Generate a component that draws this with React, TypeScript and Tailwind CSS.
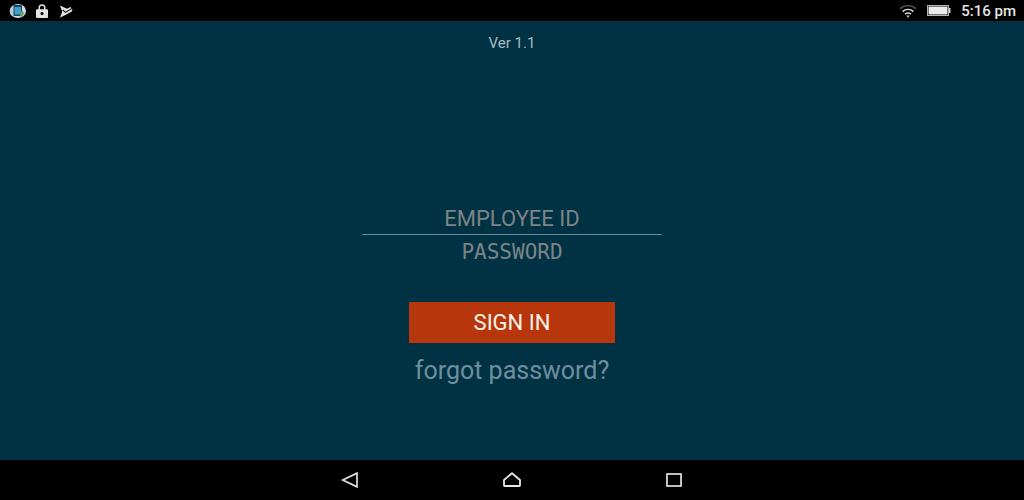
import { useState } from 'react';
import type { FormEvent } from 'react';

function StatusBar() {
  return (
    <header className="flex h-[21px] items-center justify-between bg-black px-2 text-[#e4e4e4]">
      <div className="flex items-center gap-2">
        <svg viewBox="0 0 20 16" className="h-4 w-5" aria-hidden="true">
          <ellipse cx="10" cy="8" rx="8" ry="7" fill="#d3dbe0" />
          <path d="M5 2.500a8 7 0 0 0-1 10.500l2 .5V3z" fill="#b4cbd6" />
          <rect x="5.500" y="2" width="8.500" height="11" rx="1" fill="#17465f" />
          <rect x="6.500" y="4" width="6.500" height="7.500" fill="#3f9fce" />
          <path d="M12 9l2.500-1 1.500 2-1.500 3.500h-2.500z" fill="#6aa06f" />
        </svg>
        <svg viewBox="0 0 12 16" className="h-4 w-3" aria-hidden="true">
          <path d="M3.200 7V4.700a2.800 2.800 0 0 1 5.600 0V7" fill="none" stroke="#e4e4e4" strokeWidth="1.500" />
          <path
            fillRule="evenodd"
            d="M1 6.200h10a1 1 0 0 1 1 1V14a1 1 0 0 1-1 1H1a1 1 0 0 1-1-1V7.200a1 1 0 0 1 1-1zM6 9a1.600 1.600 0 1 0 0 3.200A1.600 1.600 0 0 0 6 9z"
            fill="#e4e4e4"
          />
        </svg>
        <svg viewBox="0 0 16 16" className="ml-0.5 size-4" aria-hidden="true">
          <path d="M2 2.500L9 5.800 12.500 4 14.500 6.500 13.500 8.800 2 14.800 4.200 8.600z" fill="#e4e4e4" />
          <path d="M4.800 6.800l2.600 2.600 6.600-4" fill="none" stroke="#000" strokeWidth="1.100" />
        </svg>
      </div>
      <div className="flex items-center">
        <svg viewBox="0 0 18 14" className="mr-2.5 h-3.5 w-[18px]" fill="none" aria-hidden="true">
          <path d="M1 4.800c4.600-4.200 11.400-4.200 16 0" stroke="#555" strokeWidth="1.400" />
          <path d="M3.600 7.600c3.200-2.800 7.600-2.800 10.800 0" stroke="#d8d8d8" strokeWidth="1.600" />
          <path d="M6 10.200c1.900-1.500 4.100-1.500 6 0" stroke="#d8d8d8" strokeWidth="1.600" />
          <path d="M7.300 11.600h3.400L9 13.800z" fill="#d8d8d8" />
        </svg>
        <svg viewBox="0 0 24 12" className="mr-2.5 h-3 w-6" aria-hidden="true">
          <rect x="0.500" y="0.500" width="21" height="10" fill="none" stroke="#b5b5b5" />
          <rect x="1.500" y="1.500" width="19" height="8" fill="#ececec" />
          <rect x="22" y="3" width="1.500" height="5" fill="#d0d0d0" />
        </svg>
        <span className="text-[15px] leading-5 font-medium">5:16 pm</span>
      </div>
    </header>
  );
}

function NavBar() {
  return (
    <nav className="flex h-10 items-center justify-center gap-[142px] bg-black">
      <button type="button" aria-label="Back">
        <svg viewBox="0 0 20 20" className="size-5" fill="none" stroke="#e0e0e0" strokeWidth="1.700">
          <path d="M2.800 10L17 3.200v13.600z" />
        </svg>
      </button>
      <button type="button" aria-label="Home">
        <svg viewBox="0 0 20 20" className="size-5" fill="none" stroke="#e8e8e8" strokeWidth="1.800" strokeLinejoin="round">
          <path d="M10 3.200L18 10V15.300Q18 16 17.300 16H2.700Q2 16 2 15.300V10z" />
        </svg>
      </button>
      <button type="button" aria-label="Recent apps">
        <svg viewBox="0 0 20 20" className="size-5" fill="none" stroke="#e0e0e0" strokeWidth="1.700">
          <rect x="3" y="4" width="14" height="12" />
        </svg>
      </button>
    </nav>
  );
}

export default function App() {
  const [employeeId, setEmployeeId] = useState('');
  const [password, setPassword] = useState('');

  const handleSubmit = (e: FormEvent) => {
    e.preventDefault();
  };

  return (
    <div className="flex min-h-screen flex-col bg-[#003243] font-[Roboto,sans-serif]">
      <StatusBar />

      <main className="flex flex-1 flex-col items-center px-4 pt-3 pb-8">
        <p className="text-[15px] leading-5 text-[#a9bbc4]">Ver 1.1</p>

        <form onSubmit={handleSubmit} className="mt-[150px] flex w-full max-w-[300px] flex-col items-center">
          <input
            type="text"
            aria-label="Employee ID"
            placeholder="EMPLOYEE ID"
            value={employeeId}
            onChange={(e) => setEmployeeId(e.target.value)}
            className="h-8 w-full border-b border-[#6b8d9b] bg-transparent text-center text-[22px] text-[#b4c4cb] outline-none placeholder:text-[#7c8488]"
          />
          <input
            type="password"
            aria-label="Password"
            placeholder="PASSWORD"
            value={password}
            onChange={(e) => setPassword(e.target.value)}
            className="h-[34px] w-full bg-transparent text-center font-['DejaVu_Sans_Mono',monospace] text-[21px] text-[#b4c4cb] outline-none placeholder:text-[#7c8488]"
          />
          <button
            type="submit"
            className="mt-[33px] h-[41px] w-[206px] bg-[#b7360c] text-[22px] leading-7 text-[#fdf3e9]"
          >
            SIGN IN
          </button>
          <a href="#forgot" className="mt-3.5 text-[25px] leading-7 text-[#6f8f9f]">
            forgot password?
          </a>
        </form>
      </main>

      <NavBar />
    </div>
  );
}
